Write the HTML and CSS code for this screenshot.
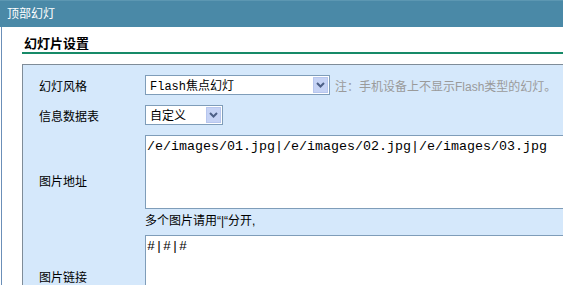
FILE: index.html
```html
<!DOCTYPE html>
<html>
    <head>
        <meta charset="UTF-8">
        <meta name="viewport" content="width=device-width, initial-scale=1.0">
        <title>顶部幻灯</title>
        <link rel="stylesheet" href="styles.css">
    </head>

    <body>
        <div class="topbar">顶部幻灯</div>
        <div id="main">
            <h2 class="section-title">幻灯片设置</h2>
            <div class="panel">
                <div class="form-row">
                    <div class="label">幻灯风格</div>
                    <div class="field">
                        <div class="fake-select wide">
                            <span class="sel-text">Flash焦点幻灯</span>
                            <span class="sel-btn">
                                <svg width="9" height="6" viewBox="0 0 9 6"><path d="M1 1 L4.5 4.5 L8 1" fill="none" stroke="#4d5f86" stroke-width="2"/></svg>
                            </span>
                        </div>
                        <span class="note">注：手机设备上不显示Flash类型的幻灯。</span>
                    </div>
                </div>

                <div class="form-row">
                    <div class="label">信息数据表</div>
                    <div class="field">
                        <div class="fake-select narrow">
                            <span class="sel-text">自定义</span>
                            <span class="sel-btn">
                                <svg width="9" height="6" viewBox="0 0 9 6"><path d="M1 1 L4.5 4.5 L8 1" fill="none" stroke="#4d5f86" stroke-width="2"/></svg>
                            </span>
                        </div>
                    </div>
                </div>

                <div class="form-row">
                    <div class="label">图片地址</div>
                    <div class="field column">
                        <textarea class="big-text" rows="4">/e/images/01.jpg|/e/images/02.jpg|/e/images/03.jpg</textarea>
                        <div class="hint">多个图片请用“|“分开,</div>
                    </div>
                </div>

                <div class="form-row">
                    <div class="label">图片链接</div>
                    <div class="field">
                        <textarea class="big-text tall" rows="5">#|#|#</textarea>
                    </div>
                </div>
            </div>
        </div>
    </body>
</html>
```

FILE: styles.css
```css
html {
    overflow: hidden;
}
body {
    margin: 0;
    padding: 0;
    font-family: 'Liberation Sans', 'Noto Sans CJK SC', sans-serif;
    font-size: 12px;
    color: #000;
    background: #fff;
}
.topbar {
    height: 27px;
    line-height: 27px;
    padding-left: 7px;
    background-color: #4a89a7;
    border-top: 1px solid #5c97b2;
    box-sizing: border-box;
    color: #fff;
}
#main {
    margin-left: 1px;
    border-left: 1px solid #6b8fb8;
    padding: 8px 0 0 20px;
    width: 640px;
}
.section-title {
    margin: 0;
    padding: 0 0 0 2px;
    height: 17px;
    line-height: 17px;
    font-size: 13px;
    font-weight: bold;
    border-bottom: 2px solid #178a68;
}
.panel {
    margin-top: 10px;
    border: 1px solid #7f8c98;
    background-color: #d5e8fb;
    padding-top: 5px;
}
.form-row {
    display: flex;
}
.label {
    width: 106px;
    padding-left: 16px;
    display: flex;
    align-items: center;
}
.field {
    display: flex;
    align-items: center;
    padding: 5px 0;
}
.field.column {
    flex-direction: column;
    align-items: flex-start;
    padding-bottom: 0;
}
.fake-select {
    height: 20px;
    box-sizing: border-box;
    border: 1px solid #7f9db9;
    background: #fff;
    display: flex;
    align-items: center;
    justify-content: space-between;
}
.fake-select.wide {
    width: 185px;
}
.fake-select.narrow {
    width: 78px;
}
.sel-text {
    padding-left: 4px;
    font-family: 'Liberation Mono', 'Noto Sans CJK SC', monospace;
    font-size: 12px;
}
.sel-btn {
    width: 15px;
    height: 16px;
    margin-right: 1px;
    background: #c6d3f5;
    border: 1px solid #b7c6ee;
    box-sizing: border-box;
    display: flex;
    align-items: center;
    justify-content: center;
}
.note {
    margin-left: 5px;
    color: #9a9a9a;
}
.big-text {
    width: 450px;
    height: 74px;
    margin: 0;
    box-sizing: border-box;
    border: 1px solid #7f9db9;
    padding: 2px 1px;
    font-family: 'Liberation Mono', monospace;
    font-size: 13.33px;
    line-height: 18px;
    resize: none;
    background: #fff;
}
.big-text.tall {
    height: 82px;
}
.hint {
    padding-top: 3px;
    line-height: 18px;
}
```
